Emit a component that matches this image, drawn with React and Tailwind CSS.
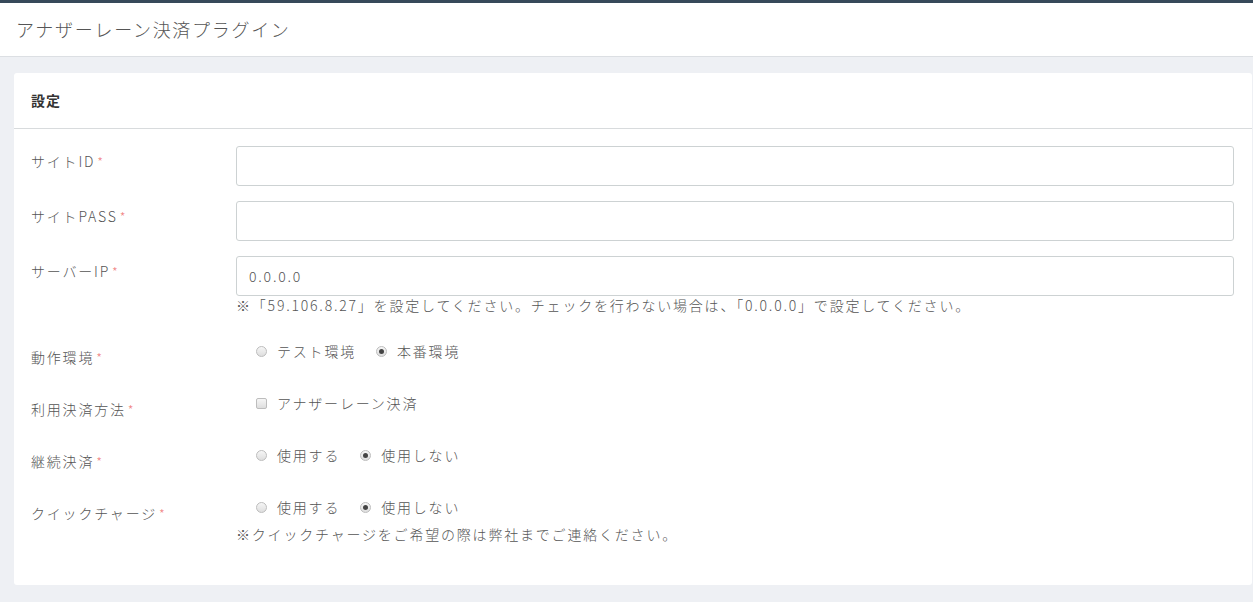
import React from 'react';

const FONT = { fontFamily: '"Noto Sans CJK JP", "Noto Sans", sans-serif' };

const Req = () => <span className="ml-[2px] text-[#f08080] text-[13px]">*</span>;

const Radio = ({ checked, label }) => (
  <label className="flex items-center mr-[20px]">
    <span className="w-[11px] h-[11px] rounded-full border border-[#bdbdbd] bg-gradient-to-b from-[#f6f6f6] to-[#dedede] flex items-center justify-center">
      {checked && <span className="w-[5px] h-[5px] rounded-full bg-[#444]" />}
    </span>
    <span className="ml-[10px]">{label}</span>
  </label>
);

const Checkbox = ({ label }) => (
  <label className="flex items-center">
    <span className="w-[11px] h-[11px] rounded-[2px] border border-[#bdbdbd] bg-gradient-to-b from-[#f6f6f6] to-[#dedede]" />
    <span className="ml-[10px]">{label}</span>
  </label>
);

const TextRow = ({ label, value, help }) => (
  <div className="flex mb-[15px]">
    <div className="w-[205px] shrink-0 pt-[5px] leading-[20px]">
      {label}
      <Req />
    </div>
    <div className="flex-1">
      <div className="h-[40px] border border-[#cdd2d3] rounded-[3px] px-3 flex items-center text-[#555]">
        {value}
      </div>
      {help && <div className="leading-[18px]">{help}</div>}
    </div>
  </div>
);

const ChoiceRow = ({ label, children, help }) => (
  <div className="flex min-h-[52px]">
    <div className="w-[205px] shrink-0 pt-[16px] leading-[20px]">
      {label}
      <Req />
    </div>
    <div className="flex-1 pt-[10px]">
      <div className="flex items-center leading-[20px] pl-[20px]">{children}</div>
      {help && <div className="leading-[18px] mt-[8px]">{help}</div>}
    </div>
  </div>
);

export default function App() {
  return (
    <div className="w-full h-[602px] bg-[#eef0f4] text-[14px] text-[#555] font-light tracking-[1.8px]" style={FONT}>
      <div className="h-[3px] bg-[#37495a]" />
      <div className="h-[54px] bg-white border-b border-[#dcdfe3] px-4 flex items-center text-[18px] tracking-[1.7px] text-[#555]">
        アナザーレーン決済プラグイン
      </div>
      <div className="pt-[16px] pl-[14px] pr-[1px]">
        <div className="bg-white rounded-[3px] h-[512px]">
          <div className="h-[56px] border-b border-[#d8dbdd] px-[17px] flex items-center font-bold tracking-[1px] text-[#333] text-[14px]">
            設定
          </div>
          <div className="pt-[17px] pl-[17px] pr-[18px]">
            <TextRow label="サイトID" value="" />
            <TextRow label="サイトPASS" value="" />
            <TextRow
              label="サーバーIP"
              value="0.0.0.0"
              help="※「59.106.8.27」を設定してください。チェックを行わない場合は、「0.0.0.0」で設定してください。"
            />
            <div className="h-[2px]" />
            <ChoiceRow label="動作環境">
              <Radio label="テスト環境" />
              <Radio label="本番環境" checked />
            </ChoiceRow>
            <ChoiceRow label="利用決済方法">
              <Checkbox label="アナザーレーン決済" />
            </ChoiceRow>
            <ChoiceRow label="継続決済">
              <Radio label="使用する" />
              <Radio label="使用しない" checked />
            </ChoiceRow>
            <ChoiceRow label="クイックチャージ" help="※クイックチャージをご希望の際は弊社までご連絡ください。">
              <Radio label="使用する" />
              <Radio label="使用しない" checked />
            </ChoiceRow>
          </div>
        </div>
      </div>
    </div>
  );
}
